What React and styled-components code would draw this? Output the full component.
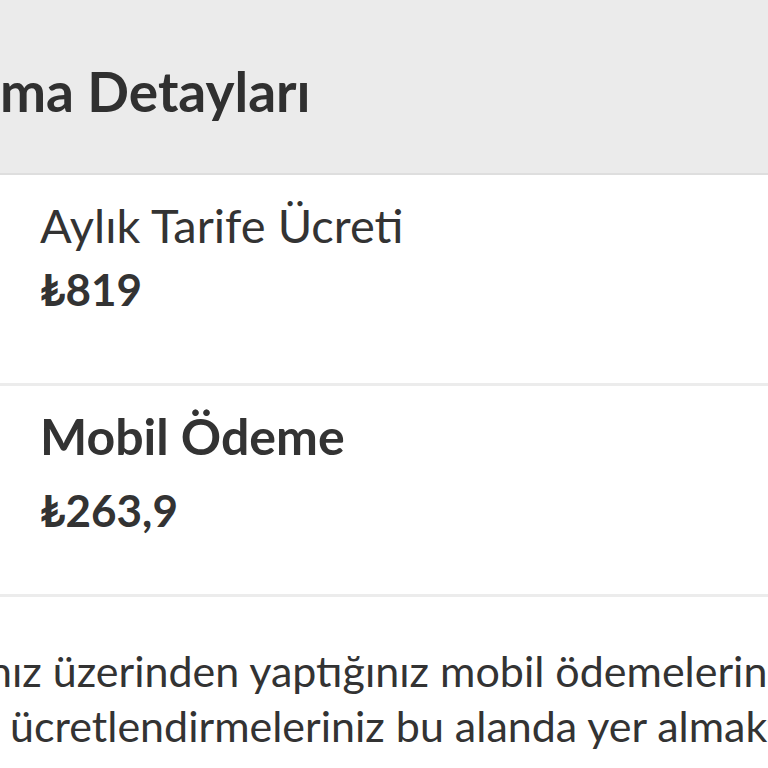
import React from "react";
import styled, { createGlobalStyle } from "styled-components";

const Global = createGlobalStyle`
    html, body {
        margin: 0;
        padding: 0;
        background: #fff;
        overflow: hidden;
    }
    body {
        font-family: Lato, "Noto Sans", sans-serif;
        color: #333;
    }
`;

const Page = styled.div`
    width: 768px;
    height: 768px;
    overflow: hidden;
    display: flex;
    flex-direction: column;
`;

const Header = styled.header`
    box-sizing: border-box;
    height: 175px;
    padding-top: 58px;
    background: #ebebeb;
    border-bottom: 2px solid #dedede;
`;

const Title = styled.h1`
    margin: 0;
    display: flex;
    white-space: nowrap;
    font-size: 55px;
    line-height: 66px;
    font-weight: 700;
    color: #303030;
`;

// zero-width box: the text inside spills out to the left, past the screen edge
const Cut = styled.span`
    width: 0;
    display: flex;
    justify-content: flex-end;
    white-space: nowrap;
`;

const Item = styled.div`
    box-sizing: border-box;
    height: 211px;
    padding: ${p => p.$top}px 0 0 40px;
    border-bottom: 3px solid #ececec;
    display: flex;
    flex-direction: column;
    gap: ${p => p.$gap}px;
`;

const Label = styled.div`
    font-size: ${p => (p.$bold ? 50 : 47)}px;
    line-height: ${p => (p.$bold ? 60 : 56)}px;
    font-weight: ${p => (p.$bold ? 700 : 400)};
    white-space: nowrap;
`;

const Price = styled.div`
    font-size: 44px;
    line-height: 53px;
    font-weight: 700;
    white-space: nowrap;
`;

const Note = styled.p`
    margin: 0;
    padding-top: 46px;
    font-size: 43px;
    line-height: 55px;
    color: #333;
`;

const Line = styled.span`
    display: flex;
    white-space: pre;
    margin-left: ${p => p.$shift}px;
`;

export default function App() {
    return (
        <>
            <Global />
            <Page>
                <Header>
                    <Title>
                        <Cut>Harca</Cut>
                        ma Detayları
                    </Title>
                </Header>
                <Item $top={22} $gap={10}>
                    <Label>Aylık Tarife Ücreti</Label>
                    <Price>₺819</Price>
                </Item>
                <Item $top={20} $gap={18}>
                    <Label $bold>Mobil Ödeme</Label>
                    <Price>₺263,9</Price>
                </Item>
                <Note>
                    <Line $shift={-12}>
                        <Cut>Hattı</Cut>
                        nız üzerinden yaptığınız mobil ödemelerinizi ve
                    </Line>
                    <Line $shift={10}>ücretlendirmeleriniz bu alanda yer almaktadır.</Line>
                </Note>
            </Page>
        </>
    );
}
